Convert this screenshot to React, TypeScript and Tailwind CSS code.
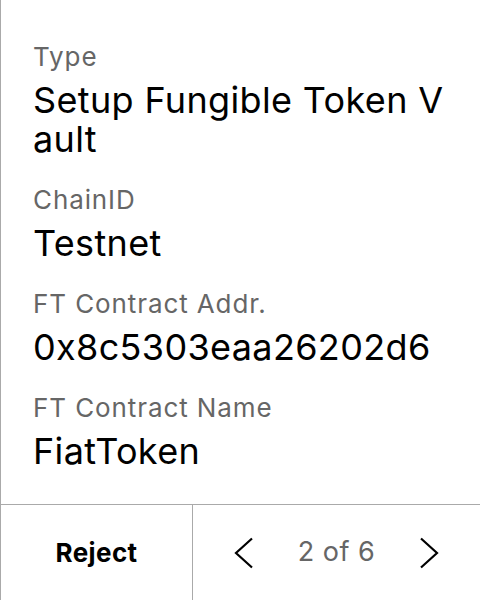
export default function App() {
  const fields = [
    { label: "Type", value: "Setup Fungible Token Vault" },
    { label: "ChainID", value: "Testnet" },
    { label: "FT Contract Addr.", value: "0x8c5303eaa26202d6" },
    { label: "FT Contract Name", value: "FiatToken" },
  ];

  return (
    <div
      className="w-[480px] h-[600px] bg-white flex flex-col border-l border-[#aaaaaa] text-black"
      style={{ fontFamily: "Inter, 'Noto Sans', sans-serif" }}
    >
      <div className="flex-1 pl-[32px] pr-[30px] pt-[41px] flex flex-col gap-[25px]">
        {fields.map((f) => (
          <div key={f.label} className="flex flex-col gap-[8px]">
            <div className="text-[26px] leading-[32px] tracking-[0.9px] text-[#666666]">{f.label}</div>
            <div className="text-[36px] leading-[39px] tracking-[0.35px] break-all">{f.value}</div>
          </div>
        ))}
      </div>
      <div className="h-[96px] flex border-t border-[#aaaaaa]">
        <div className="w-[192px] flex items-center justify-center border-r border-[#aaaaaa] text-[26px] font-bold tracking-[0.4px]">
          Reject
        </div>
        <div className="flex-1 flex items-center justify-center gap-[44px]">
          <svg width="20" height="32" viewBox="0 0 20 32" fill="none" stroke="black" strokeWidth="2.2">
            <path d="M18 1.5 L2 16 L18 30.5" />
          </svg>
          <span className="text-[27px] tracking-[0.5px] text-[#666666]">2 of 6</span>
          <svg width="20" height="32" viewBox="0 0 20 32" fill="none" stroke="black" strokeWidth="2.2">
            <path d="M2 1.5 L18 16 L2 30.5" />
          </svg>
        </div>
      </div>
    </div>
  );
}
